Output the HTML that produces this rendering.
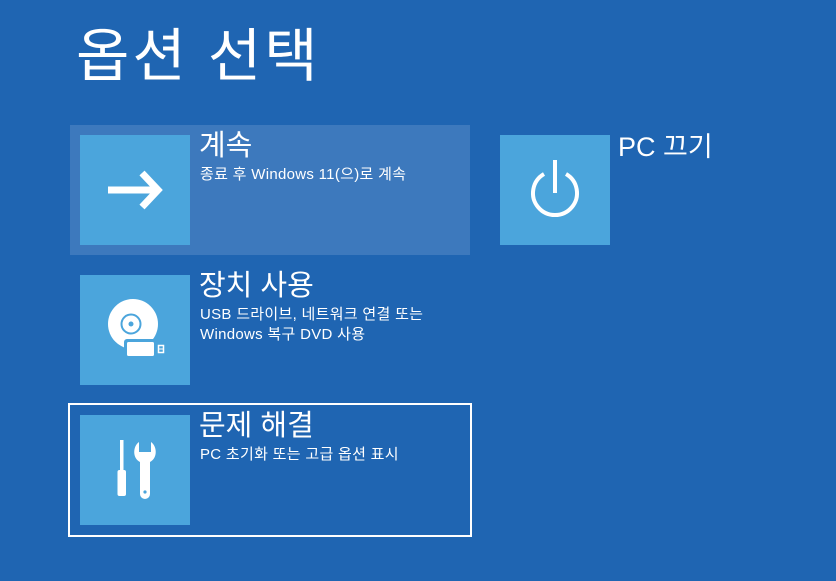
<!DOCTYPE html>
<html><head><meta charset="utf-8"><style>
body{margin:0;width:836px;height:581px;background:#1f65b2;overflow:hidden;font-family:"Liberation Sans","Noto Sans CJK KR",sans-serif;color:#fff;position:relative}
.a{position:absolute}
.tile{position:absolute;width:110px;height:110px;background:#4ba5dc}
h1{position:absolute;left:76px;top:9px;margin:0;font-weight:400;font-size:58px;letter-spacing:3px;white-space:nowrap}
.t{position:absolute;font-size:29px;line-height:34px;white-space:nowrap}
.s{position:absolute;font-size:15px;line-height:20px;white-space:nowrap;letter-spacing:0.3px}
</style></head><body>
<h1>옵션 선택</h1>
<div class="a" style="left:70px;top:125px;width:400px;height:130px;background:#3d79bd"></div>
<div class="a" style="left:68px;top:403px;width:400px;height:130px;border:2px solid #fff"></div>

<div class="tile" style="left:80px;top:135px">
<svg width="110" height="110"><path d="M28 55H76M62 38L78 55L62 72" stroke="#fff" stroke-width="7" fill="none" stroke-linejoin="miter" stroke-linecap="butt"/></svg></div>
<div class="t" style="left:199px;top:129px">계속</div>
<div class="s" style="left:200px;top:165px">종료 후 Windows 11(으)로 계속</div>

<div class="tile" style="left:80px;top:275px">
<svg width="110" height="110"><circle cx="53" cy="49" r="25" fill="#fff"/><circle cx="51" cy="49" r="9.5" fill="none" stroke="#4ba5dc" stroke-width="2"/><circle cx="51" cy="49" r="2.5" fill="#4ba5dc"/><rect x="44" y="64" width="33" height="20" rx="3" fill="#4ba5dc"/><rect x="47" y="67" width="27" height="14" rx="1.5" fill="#fff"/><rect x="78.5" y="70.5" width="5" height="7" fill="none" stroke="#fff" stroke-width="1.5"/><path d="M78 74H84" stroke="#fff" stroke-width="1"/></svg></div>
<div class="t" style="left:199px;top:269px">장치 사용</div>
<div class="s" style="left:200px;top:305px">USB 드라이브, 네트워크 연결 또는<br>Windows 복구 DVD 사용</div>

<div class="tile" style="left:80px;top:415px">
<svg width="110" height="110"><rect x="40" y="25" width="3.5" height="32" fill="#fff"/><rect x="37.5" y="55" width="8.5" height="26" rx="2" fill="#fff"/><path d="M59 27C53 31 52 43 60 47V79a5 5 0 0 0 10 0V47C78 43 77 31 71 27V37H59Z" fill="#fff"/><circle cx="65" cy="77" r="1.6" fill="#4ba5dc"/></svg></div>
<div class="t" style="left:199px;top:409px">문제 해결</div>
<div class="s" style="left:200px;top:445px">PC 초기화 또는 고급 옵션 표시</div>

<div class="tile" style="left:500px;top:135px">
<svg width="110" height="110"><path d="M44 39A22 22 0 1 0 66 39" stroke="#fff" stroke-width="4" fill="none"/><path d="M55 25V58" stroke="#fff" stroke-width="4"/></svg></div>
<div class="t" style="left:618px;top:130px;font-size:27px">PC 끄기</div>
</body></html>
